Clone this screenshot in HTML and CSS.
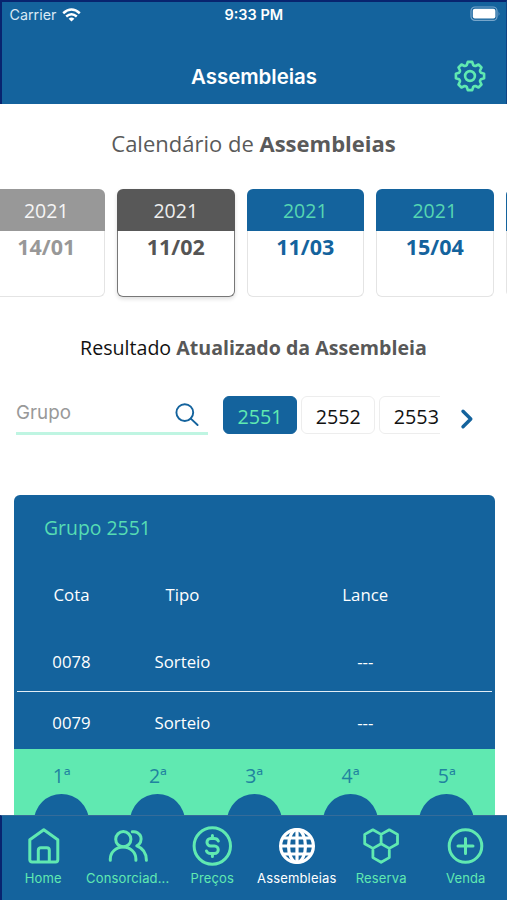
FILE: index.html
```html
<!DOCTYPE html>
<html lang="pt">
<head>
<meta charset="utf-8">
<title>Assembleias</title>
<link rel="stylesheet" href="styles.css">
</head>
<body>
<div class="app">
  <header class="header">
    <div class="status">
      <div class="carrier"><span>Carrier</span>
        <svg width="19" height="14" viewBox="0 0 19 14" fill="none" stroke="#fff" stroke-width="2.5"><path d="M1.2 5.2Q9.5-2.2 17.8 5.2M4.2 8.5Q9.5 4 14.8 8.5"/><path d="M9.5 13.6 6.6 10.7Q9.5 8.5 12.4 10.7Z" fill="#fff" stroke="none"/></svg>
      </div>
      <span class="time">9:33 PM</span>
      <svg class="battery" width="31" height="16" viewBox="0 0 31 16"><rect x="1" y="1" width="26" height="13.4" rx="4" fill="none" stroke="#77a6cb" stroke-width="1.2"/><rect x="2.8" y="2.8" width="22.6" height="9.6" rx="2" fill="#fff"/><path d="M28.6 5.2q1.7 2.4 0 4.8z" fill="#77a6cb"/></svg>
    </div>
    <div class="titlebar">
      <h1>Assembleias</h1>
      <svg class="gear" width="32" height="32" viewBox="-16 -16 32 32" fill="none" stroke="#60e9b1" stroke-width="2.6" stroke-linejoin="round"><path d="M-3.2-11-2.2-14.1H2.2L3.2-11Q4.4-9.7 5.5-10L8.5-11.5 11.5-8.5 10-5.5Q9.7-4.4 11-3.2L14.1-2.2V2.2L11 3.2Q9.7 4.4 10 5.5L11.5 8.5 8.5 11.5 5.5 10Q4.4 9.7 3.2 11L2.2 14.1H-2.2L-3.2 11Q-4.4 9.7-5.5 10L-8.5 11.5-11.5 8.5-10 5.5Q-9.7 4.4-11 3.2L-14.1 2.2V-2.2L-11-3.2Q-9.7-4.4-10-5.5L-11.5-8.5-8.5-11.5-5.5-10Q-4.4-9.7-3.2-11Z"/><circle r="4.9"/></svg>
    </div>
  </header>

  <main class="content">
    <h2 class="calendar-title"><span>Calendário de <b>Assembleias</b></span></h2>
    <div class="dates">
      <div class="date past"><div class="year">2021</div><div class="day">14/01</div></div>
      <div class="date selected"><div class="year">2021</div><div class="day">11/02</div></div>
      <div class="date"><div class="year">2021</div><div class="day">11/03</div></div>
      <div class="date"><div class="year">2021</div><div class="day">15/04</div></div>
      <div class="date"><div class="year"></div><div class="day"></div></div>
    </div>
    <h2 class="result-title"><span>Resultado <b>Atualizado da Assembleia</b></span></h2>
    <div class="filter">
      <div class="search"><span>Grupo</span>
        <svg width="24" height="24" viewBox="0 0 24 24" fill="none" stroke="#14639d" stroke-width="1.9" stroke-linecap="round"><circle cx="9.8" cy="9.6" r="8.4"/><path d="m15.8 15.6 6.8 6.4"/></svg>
      </div>
      <div class="groups">
        <div class="group active">2551</div>
        <div class="group">2552</div>
        <div class="group">2553</div>
      </div>
      <svg class="next" width="14" height="22" viewBox="0 0 14 22" fill="none" stroke="#14639d" stroke-width="3.4" stroke-linecap="round" stroke-linejoin="round"><path d="m3 3.2 7.8 7.8L3 18.8"/></svg>
    </div>
    <section class="panel">
      <h3>Grupo 2551</h3>
      <div class="row head"><span>Cota</span><span>Tipo</span><span>Lance</span></div>
      <div class="row first"><span>0078</span><span>Sorteio</span><span>---</span></div>
      <div class="row second"><span>0079</span><span>Sorteio</span><span>---</span></div>
      <div class="prizes">
        <div class="prize"><span>1ª</span><i></i></div>
        <div class="prize"><span>2ª</span><i></i></div>
        <div class="prize"><span>3ª</span><i></i></div>
        <div class="prize"><span>4ª</span><i></i></div>
        <div class="prize"><span>5ª</span><i></i></div>
      </div>
    </section>
  </main>

  <nav class="nav">
    <div class="tab"><svg viewBox="0 0 40 40"><path d="M6.8 13.8 20.8 3.8l14 10v20a2.2 2.2 0 0 1-2.2 2.2H9a2.2 2.2 0 0 1-2.2-2.2ZM15.300 36V24.200a2.500 2.500 0 0 1 2.500-2.500h6a2.500 2.500 0 0 1 2.500 2.500V36"/></svg><span>Home</span></div>
    <div class="tab"><svg viewBox="0 0 40 40"><circle cx="15.300" cy="13.200" r="7.600"/><path d="M2.300 34.200V33a12.800 12 0 0 1 25.600 0v1.200M24.300 5.800a7.400 7.400 0 0 1 4.500 14q9.600 3.700 9.600 14.400"/></svg><span>Consorciad...</span></div>
    <div class="tab"><svg viewBox="0 0 40 40"><circle cx="20.300" cy="20" r="18.200"/><path d="M26.300 15q-1-2.500-4-2.500h-3.600a3.750 3.750 0 0 0 0 7.500h3.800a3.750 3.750 0 0 1 0 7.500h-4q-3 0-4-2.500M20.400 9.500v3M20.400 27.500v3"/></svg><span>Preços</span></div>
    <div class="tab current"><svg viewBox="0 0 40 40"><circle cx="20" cy="20" r="16.400"/><ellipse cx="20" cy="20" rx="8.500" ry="16.400"/><path d="M20 3.500v33M4 20h32M6.500 12h27M6.500 28h27"/></svg><span>Assembleias</span></div>
    <div class="tab"><svg class="thin" viewBox="0 0 40 40"><path d="m11.900 3.800 8.200 4.600v9.300l-8.200 4.700-8.200-4.700V8.400ZM28.300 3.800l8.200 4.600v9.300l-8.200 4.700-8.200-4.700V8.400ZM11.900 22.400v9.200l8.200 4.700 8.200-4.700v-9.200"/></svg><span>Reserva</span></div>
    <div class="tab"><svg viewBox="0 0 40 40"><circle cx="19.500" cy="20" r="16.300"/><path d="M12 20h15M19.500 12.500v15"/></svg><span>Venda</span></div>
  </nav>
</div>
</body>
</html>
```
FILE: styles.css
```css
* { box-sizing: border-box; }
body { margin: 0; background: #fff; font-family: "Open Sans", "Noto Sans", sans-serif; color: #111; }
h1, h2, h3 { margin: 0; font-weight: 400; }
svg { display: block; flex: none; }
.app { width: 507px; height: 900px; display: flex; flex-direction: column; overflow: hidden; white-space: nowrap; }

.header { height: 104px; flex: none; background: #14639d; border-top: 2px solid #08246f; border-left: 2px solid #08246f; border-right: 1px solid #0d4485; color: #fff; font-family: Inter, sans-serif; }
.status { height: 25px; display: grid; grid-template-columns: 1fr auto 1fr; align-items: center; padding: 0 5px 0 7.5px; font-size: 14.3px; }
.carrier { display: flex; align-items: center; gap: 6px; color: #d9e9f5; }
.time { font-weight: 600; font-size: 14.5px; margin-right: 3px; }
.battery { justify-self: end; margin-top: -1px; }
.titlebar { height: 72px; margin-top: 13px; padding: 0 20.5px 0 0; display: grid; grid-template-columns: 52.5px 1fr 32px; align-items: center; }
.titlebar h1 { grid-column: 2; text-align: center; font-size: 20.4px; font-weight: 600; }

.content { flex: 1; min-height: 0; overflow: hidden; }
.calendar-title { height: 85px; padding-top: 24px; text-align: center; font-size: 22px; line-height: 30px; color: #5a5a5a; }
.dates { display: flex; gap: 12px; margin-left: -12.5px; height: 108px; }
.date { width: 117.5px; flex: none; display: flex; flex-direction: column; border-radius: 6px; text-align: center; color: #14639d; }
.year { height: 42px; border-radius: 6px 6px 0 0; line-height: 44px; font-size: 19.5px; background: #14639d; color: #56d6b2; }
.day { flex: 1; border: 1.5px solid #e4e4e4; border-top: 0; border-radius: 0 0 6px 6px; font-size: 21.5px; font-weight: 700; line-height: 32px; }
.date.past { color: #989898; }
.past .year { background: #989898; color: #f5f5f5; }
.date.selected { color: #555; box-shadow: 0 2px 4px #0002; }
.selected .year { background: #585858; color: #eee; }
.selected .day { border-color: #777; }
.result-title { height: 99px; padding-top: 37px; text-align: center; font-size: 19.6px; line-height: 28px; }
.result-title b { color: #585858; }
.filter { height: 39px; display: flex; align-items: flex-start; padding: 0 0 0 16px; }
.search { width: 192px; height: 39px; display: flex; justify-content: space-between; align-items: center; border-bottom: 3px solid #bff5e2; padding: 0 9px 3px 0; color: #999; font: 400 18.8px Inter, sans-serif; }
.search svg { margin-top: 4px; }
.groups { width: 217px; height: 38px; margin-left: 15px; display: flex; gap: 4.2px; overflow: hidden; }
.group { width: 74px; height: 37.5px; flex: none; border: 1px solid #ededed; border-radius: 6px; text-align: center; font-size: 19.7px; line-height: 40px; }
.group.active { background: #14639d; border-color: #14639d; color: #60e9b1; }
.next { margin: 11.5px 0 0 20px; }
.panel { margin: 60px 12px 0 13.5px; height: 400px; background: #14639d; border-radius: 6px; color: #fff; }
.panel h3 { height: 66px; padding: 19px 0 0 30.5px; font-size: 19.4px; line-height: 28px; color: #56dcb3; }
.row { margin: 0 3px; display: grid; grid-template-columns: 110px 112px 1fr; text-align: center; font-size: 16.8px; align-items: center; }
.head { height: 67px; }
.first { height: 64px; border-bottom: 1px solid #e2edf5; padding-top: 4px; }
.second { height: 57px; padding-top: 4px; }
.prizes { height: 80px; background: #60e9b1; display: grid; grid-template-columns: repeat(5, 1fr); }
.prize { display: flex; flex-direction: column; align-items: center; color: #20839f; font-size: 19.5px; line-height: 28px; padding-top: 13px; }
.prize i { width: 55px; height: 55px; margin-top: 4px; flex: none; border-radius: 50%; background: #14639d; }

.nav { height: 85px; flex: none; background: #14639d; border-left: 2px solid #08246f; border-top: 1px solid #356c9a; display: grid; grid-template-columns: repeat(6, 84.5px); }
.tab { margin-left: -2px; padding-top: 10px; display: flex; flex-direction: column; align-items: center; color: #60e9b1; font: 400 13px/20px Inter, sans-serif; }
.tab svg { width: 40px; height: 40px; fill: none; stroke: currentColor; stroke-width: 3; stroke-linecap: round; stroke-linejoin: round; }
.tab svg.thin { stroke-width: 2.8; }
.tab span { margin-top: 2px; letter-spacing: .15px; }
.tab.current { color: #fff; }
.tab.current svg { stroke-width: 3.2; }
```
